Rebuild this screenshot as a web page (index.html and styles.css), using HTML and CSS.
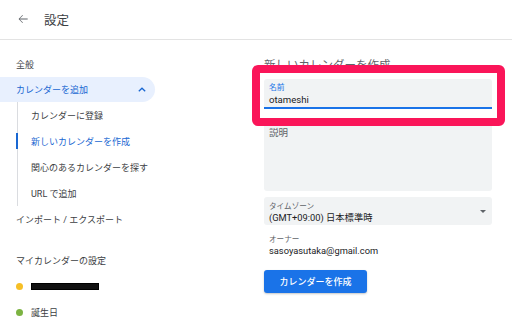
FILE: index.html
```html
<!DOCTYPE html>
<html lang="ja">
<head>
  <meta charset="UTF-8" />
  <meta name="viewport" content="width=device-width, initial-scale=1" />
  <title>設定</title>
  <link rel="stylesheet" href="styles.css">
</head>
<body>

  <header class="topbar">
    <svg class="back-icon" viewBox="0 0 24 24" width="14" height="14">
      <path d="M20 11.3H6.6l5.3-5.3-.8-.8L4.4 12l6.7 6.8.8-.8-5.3-5.3H20z" fill="#5f6368"/>
    </svg>
    <h1 class="title">設定</h1>
  </header>

  <div class="layout">
    <nav class="sidebar">
      <div class="nav-item">全般</div>
      <div class="nav-item active">
        カレンダーを追加
        <svg class="chevron" viewBox="0 0 10 6" width="8" height="5">
          <path d="M1 5.2L5 1.4l4 3.8" fill="none" stroke="#1967d2" stroke-width="1.6"/>
        </svg>
      </div>
      <div class="sub-list">
        <div class="sub-item">カレンダーに登録</div>
        <div class="sub-item current">新しいカレンダーを作成</div>
        <div class="sub-item">関心のあるカレンダーを探す</div>
        <div class="sub-item">URL で追加</div>
      </div>
      <div class="nav-item">インポート / エクスポート</div>

      <div class="nav-item section">マイカレンダーの設定</div>
      <div class="nav-item cal-item">
        <span class="dot yellow"></span>
        <span class="redacted"></span>
      </div>
      <div class="nav-item cal-item">
        <span class="dot green"></span>
        <span>誕生日</span>
      </div>
    </nav>

    <main class="content">
      <h2 class="heading">新しいカレンダーを作成</h2>

      <div class="field name-field">
        <div class="field-label">名前</div>
        <div class="field-value">otameshi</div>
      </div>

      <div class="field desc-field">
        <div class="placeholder">説明</div>
      </div>

      <div class="field select-field">
        <div>
          <div class="field-label grey">タイムゾーン</div>
          <div class="field-value">(GMT+09:00) 日本標準時</div>
        </div>
        <span class="caret"></span>
      </div>

      <div class="owner">
        <div class="field-label grey">オーナー</div>
        <div class="field-value">sasoyasutaka@gmail.com</div>
      </div>

      <button class="create-btn">カレンダーを作成</button>

      <div class="highlight"></div>
    </main>
  </div>

</body>
</html>
```

FILE: styles.css
```css
body {
  margin: 0;
  font-family: Roboto, "Noto Sans CJK JP", sans-serif;
  color: #3c4043;
  background: #fff;
  width: 512px;
  height: 333px;
  overflow: hidden;
}

.topbar {
  height: 40px;
  display: flex;
  align-items: center;
  border-bottom: 1px solid #e3e3e3;
  box-sizing: border-box;
  padding-left: 16px;
}

.back-icon {
  margin-right: 14px;
  margin-top: -1px;
}

.title {
  margin: 0;
  font-size: 12.5px;
  font-weight: 400;
  color: #3c4043;
}

.layout {
  display: flex;
  position: relative;
}

.sidebar {
  width: 252px;
  padding-top: 11px;
  font-size: 9px;
}

.nav-item {
  height: 26px;
  display: flex;
  align-items: center;
  padding-left: 16px;
}

.nav-item.active {
  width: 155px;
  height: 25px;
  box-sizing: border-box;
  background: #e8f0fe;
  color: #1967d2;
  border-radius: 0 13px 13px 0;
  justify-content: space-between;
  padding-right: 9px;
}

.chevron {
  margin-top: -1px;
}

.sub-list {
  margin-left: 17px;
  border-left: 1px solid #dadce0;
}

.sub-item {
  height: 26px;
  display: flex;
  align-items: center;
  padding-left: 13px;
  position: relative;
}

.sub-item.current {
  color: #1967d2;
}

.sub-item.current::before {
  content: "";
  position: absolute;
  left: -2px;
  top: 5px;
  width: 2px;
  height: 16px;
  background: #1967d2;
}

.section {
  margin-top: 15px;
}

.cal-item {
  gap: 8px;
}

.dot {
  width: 7px;
  height: 7px;
  border-radius: 50%;
  display: inline-block;
}

.dot.yellow {
  background: #f6bf26;
}

.dot.green {
  background: #7cb342;
}

.redacted {
  width: 66px;
  height: 5px;
  background: #111;
  border: 1px solid #000;
  margin-top: 1px;
}

.content {
  width: 228px;
  padding-left: 12px;
  padding-top: 17px;
}

.heading {
  margin: 0 0 6px;
  font-size: 11.5px;
  font-weight: 400;
  line-height: 16px;
  color: #5f6368;
}

.field {
  background: #f1f3f4;
  border-radius: 3px 3px 0 0;
  box-sizing: border-box;
}

.name-field {
  height: 30px;
  padding: 4px 5px 0;
  border-bottom: 2px solid #1a73e8;
}

.field-label {
  font-size: 7.8px;
  line-height: 10px;
  color: #1a73e8;
}

.field-label.grey {
  color: #5f6368;
  font-size: 7.6px;
  line-height: 10px;
}

.field-value {
  font-size: 9.3px;
  line-height: 12px;
  color: #202124;
}

.name-field .field-value {
  font-size: 9.6px;
  margin-top: 1px;
}

.desc-field {
  margin-top: 11px;
  height: 71px;
  border-radius: 3px;
  padding: 5px 5px 0;
}

.placeholder {
  font-size: 9.5px;
  color: #5f6368;
}

.select-field {
  margin-top: 6px;
  height: 28px;
  border-radius: 3px;
  padding: 5px 6px 0 5px;
  display: flex;
  justify-content: space-between;
  align-items: flex-start;
}

.caret {
  width: 0;
  height: 0;
  border-left: 3px solid transparent;
  border-right: 3px solid transparent;
  border-top: 3px solid #5f6368;
  margin-top: 8px;
}

.owner {
  padding: 10px 5px 0;
}

.create-btn {
  margin-top: 13px;
  width: 103px;
  height: 23px;
  background: #1a73e8;
  color: #fff;
  border: none;
  border-radius: 3px;
  font-family: Roboto, "Noto Sans CJK JP", sans-serif;
  font-size: 9px;
  font-weight: 500;
  box-shadow: 0 1px 2px rgba(60, 64, 67, 0.3);
}

/* annotation frame drawn over the name field */
.highlight {
  position: absolute;
  left: 252px;
  top: 25px;
  width: 253px;
  height: 61px;
  box-sizing: border-box;
  border: 8px solid #fa1559;
  border-radius: 6px;
}
```
